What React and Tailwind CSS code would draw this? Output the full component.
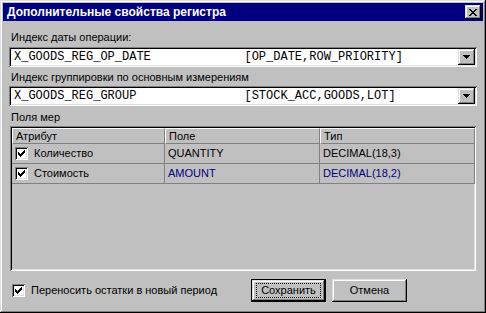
import React from 'react';

const raised = 'shadow-[inset_-1px_-1px_#000,inset_1px_1px_#dfdfdf,inset_-2px_-2px_#808080,inset_2px_2px_#fff]';
const sunken = 'shadow-[inset_1px_1px_#808080,inset_-1px_-1px_#fff,inset_2px_2px_#000,inset_-2px_-2px_#dfdfdf]';

function Check() {
  return (
    <span className={`w-[13px] h-[13px] bg-white shrink-0 flex items-center justify-center ${sunken}`}>
      <svg width="7" height="7" viewBox="0 0 7 7" shapeRendering="crispEdges">
        <path d="M6 0h1v1H6z M5 1h2v1H5z M0 2h1v1H0z M4 2h3v1H4z M0 3h2v1H0z M3 3h3v1H3z M0 4h5v1H0z M1 5h3v1H1z M2 6h1v1H2z" fill="#000" />
      </svg>
    </span>
  );
}

function Combo({ value }) {
  return (
    <div className={`h-[20px] bg-white flex items-center pl-[5px] pr-[2px] ${sunken}`}>
      <span className="flex-1 whitespace-pre text-[12px] font-['Liberation_Mono',monospace] text-black leading-none">{value}</span>
      <span className={`w-[17px] h-[16px] bg-[#c0c0c0] flex items-center justify-center ${raised}`}>
        <svg width="7" height="4" viewBox="0 0 7 4" shapeRendering="crispEdges">
          <path d="M0 0h7v1H0z M1 1h5v1H1z M2 2h3v1H2z M3 3h1v1H3z" fill="#000" />
        </svg>
      </span>
    </div>
  );
}

const rows = [
  { a: 'Количество', f: 'QUANTITY', t: 'DECIMAL(18,3)', blue: false },
  { a: 'Стоимость', f: 'AMOUNT', t: 'DECIMAL(18,2)', blue: true },
];

export default function App() {
  return (
    <div className={`w-[486px] h-[313px] bg-[#c0c0c0] p-[3px] flex flex-col font-['Liberation_Sans',Arial,sans-serif] text-[11px] text-black ${raised}`}>
      {/* Title bar */}
      <div className="h-[18px] bg-[#000080] flex items-center justify-between pl-[4px] pr-[2px]">
        <span className="text-white font-bold text-[12px] leading-none">Дополнительные свойства регистра</span>
        <span className={`w-[16px] h-[14px] bg-[#c0c0c0] flex items-center justify-center ${raised}`}>
          <svg width="8" height="7" viewBox="0 0 8 7" shapeRendering="crispEdges">
            <path d="M0 0h2v1H0z M6 0h2v1H6z M1 1h2v1H1z M5 1h2v1H5z M2 2h4v1H2z M3 3h2v1H3z M2 4h4v1H2z M1 5h2v1H1z M5 5h2v1H5z M0 6h2v1H0z M6 6h2v1H6z" fill="#000" />
          </svg>
        </span>
      </div>

      {/* Body */}
      <div className="flex-1 flex flex-col px-[6px] pt-[10px]">
        <div className="h-[13px] leading-[13px] pl-[2px]">Индекс даты операции:</div>
        <div className="mt-[3px]">
          <Combo value={'X_GOODS_REG_OP_DATE             [OP_DATE,ROW_PRIORITY]'} />
        </div>
        <div className="h-[13px] leading-[13px] pl-[2px] mt-[4px]">Индекс группировки по основным измерениям</div>
        <div className="mt-[2px]">
          <Combo value={'X_GOODS_REG_GROUP               [STOCK_ACC,GOODS,LOT]'} />
        </div>
        <div className="h-[13px] leading-[13px] pl-[2px] mt-[5px]">Поля мер</div>

        {/* Table */}
        <div className={`mt-[2px] ml-[1px] mr-[1px] h-[145px] p-[2px] ${sunken}`}>
          <div className="grid grid-cols-[153px_155px_155px]">
            {['Атрибут', 'Поле', 'Тип'].map((h) => (
              <div key={h} className="h-[16px] leading-[15px] pl-[3px] border-t border-l border-white border-r border-b border-r-[#808080] border-b-[#808080] text-[11px]">{h}</div>
            ))}
            {rows.map((r) => (
              <React.Fragment key={r.a}>
                <div className="h-[20px] flex items-center gap-[6px] pl-[3px] border-r border-b border-[#808080]">
                  <Check />
                  <span>{r.a}</span>
                </div>
                <div className={`h-[20px] flex items-center pl-[3px] border-r border-b border-[#808080] ${r.blue ? 'text-[#000080]' : ''}`}>{r.f}</div>
                <div className={`h-[20px] flex items-center pl-[3px] border-r border-b border-[#808080] ${r.blue ? 'text-[#000080]' : ''}`}>{r.t}</div>
              </React.Fragment>
            ))}
          </div>
        </div>

        {/* Footer */}
        <div className="flex items-center mt-[8px]">
          <div className="flex items-center gap-[6px] pl-[3px] w-[242px]">
            <Check />
            <span>Переносить остатки в новый период</span>
          </div>
          <button className="w-[75px] h-[23px] border border-black bg-[#c0c0c0] p-0 flex items-center justify-center">
            <span className={`w-full h-full flex items-center justify-center ${raised}`}>
              <span className="border border-dotted border-black px-[4px] leading-[13px]">Сохранить</span>
            </span>
          </button>
          <button className={`ml-[6px] w-[75px] h-[23px] bg-[#c0c0c0] flex items-center justify-center ${raised}`}>Отмена</button>
        </div>
      </div>
    </div>
  );
}
